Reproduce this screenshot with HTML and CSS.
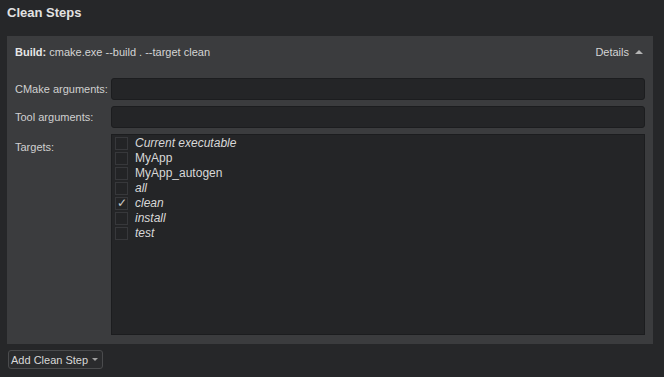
FILE: index.html
```html
<!DOCTYPE html>
<html lang="en">
<head>
    <meta charset="UTF-8">
    <title>Clean Steps</title>
    <link rel="stylesheet" href="styles.css">
</head>
<body>

    <h2 class="title">Clean Steps</h2>

    <div class="panel">
        <div class="build-row">
            <span><b>Build:</b> cmake.exe --build . --target clean</span>
            <span class="details">Details <span class="arrow-up"></span></span>
        </div>

        <div class="form">
            <label>CMake arguments:</label>
            <input type="text" class="field">

            <label>Tool arguments:</label>
            <input type="text" class="field">

            <label class="top">Targets:</label>
            <div class="targets">
                <div class="target"><span class="check"></span><i>Current executable</i></div>
                <div class="target"><span class="check"></span>MyApp</div>
                <div class="target"><span class="check"></span>MyApp_autogen</div>
                <div class="target"><span class="check"></span><i>all</i></div>
                <div class="target"><span class="check">&#10003;</span><i>clean</i></div>
                <div class="target"><span class="check"></span><i>install</i></div>
                <div class="target"><span class="check"></span><i>test</i></div>
            </div>
        </div>
    </div>

    <button class="add-btn">Add Clean Step <span class="arrow-down"></span></button>

</body>
</html>
```

FILE: styles.css
```css
body {
    margin: 0;
    padding: 0 7px;
    background: #262729;
    color: #d4d4d4;
    font-family: 'Liberation Sans', Arial, sans-serif;
    font-size: 11px;
    line-height: 15px;
}

.title {
    margin: 0;
    height: 36px;
    line-height: 26px;
    font-size: 13px;
    font-weight: bold;
    color: #e2e2e2;
}

.panel {
    width: 646px;
    box-sizing: border-box;
    background: #3b3c3e;
    padding: 8px 8px 9px 8px;
}

.build-row {
    display: flex;
    justify-content: space-between;
    align-items: center;
    height: 16px;
    margin-bottom: 18px;
    white-space: nowrap;
}

.build-row b {
    color: #e6e6e6;
}

.details {
    display: flex;
    align-items: center;
    gap: 6px;
    padding-right: 2px;
}

.arrow-up {
    width: 0;
    height: 0;
    border-left: 4px solid transparent;
    border-right: 4px solid transparent;
    border-bottom: 4px solid #b4b4b4;
}

.form {
    display: grid;
    grid-template-columns: 96px 1fr;
    row-gap: 6px;
    align-items: center;
}

.form label {
    color: #d0d0d0;
    white-space: nowrap;
}

.form label.top {
    align-self: start;
    padding-top: 6px;
}

.field {
    height: 22px;
    box-sizing: border-box;
    background: #242527;
    border: 1px solid #1c1d1f;
    border-radius: 3px;
    margin: 0;
}

.targets {
    height: 201px;
    box-sizing: border-box;
    background: #242527;
    border: 1px solid #1c1d1f;
    padding: 1px 3px;
}

.target {
    display: flex;
    align-items: center;
    height: 15px;
    gap: 7px;
    font-size: 12px;
    color: #d8d8d8;
    white-space: nowrap;
}

.check {
    width: 13px;
    height: 13px;
    box-sizing: border-box;
    background: #232426;
    border: 1px solid #37383b;
    display: flex;
    align-items: center;
    justify-content: center;
    font-size: 12px;
    line-height: 13px;
    color: #c8c8c8;
}

.add-btn {
    margin-top: 6px;
    margin-left: 1px;
    height: 19px;
    padding: 0 4px 0 2px;
    background: #2a2b2d;
    border: 1px solid #4a4b4d;
    border-radius: 3px;
    color: #d8d8d8;
    font-family: inherit;
    font-size: 11px;
    display: flex;
    align-items: center;
    gap: 4px;
}

.arrow-down {
    width: 0;
    height: 0;
    border-left: 3px solid transparent;
    border-right: 3px solid transparent;
    border-top: 3px solid #a0a0a0;
}
```
